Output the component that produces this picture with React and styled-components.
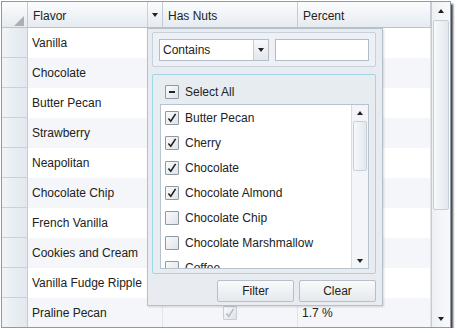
import React from "react";
import styled, { createGlobalStyle } from "styled-components";

const Global = createGlobalStyle`
  html, body { margin: 0; padding: 0; background: #fff; }
  body { font-family: "Liberation Sans", Arial, sans-serif; font-size: 12px; color: #222; }
  * { box-sizing: border-box; }
`;

const Frame = styled.div`
  position: relative;
  margin: 1px 0 0 1px;
  width: 450px;
  height: 327px;
  border: 1px solid #8f9aa6;
  box-shadow: 2px 3px 2px rgba(0, 0, 0, 0.75);
  display: flex;
  overflow: hidden;
  background: #fff;
`;

const Grid = styled.div`
  flex: 1;
  display: flex;
  flex-direction: column;
`;

const COLS = "26px 135px 135px 133px";

const HeaderRow = styled.div`
  display: grid;
  grid-template-columns: ${COLS};
  height: 26px;
  flex: none;
  background: linear-gradient(#fbfcfd, #e6ebf0);
  border-bottom: 1px solid #b9c3cd;
`;

const HeaderCell = styled.div`
  display: flex;
  align-items: center;
  padding-left: ${(p) => (p.$corner ? 0 : 5)}px;
  padding-top: ${(p) => (p.$corner ? 0 : 2)}px;
  border-right: 1px solid #c3ccd5;
  position: relative;
  color: #222;
`;

const HeaderLabel = styled.span`
  flex: 1;
`;

const FilterBtn = styled.div`
  width: 15px;
  align-self: stretch;
  margin-top: -2px;
  border-left: 1px solid #c9d1da;
  display: flex;
  align-items: center;
  justify-content: center;
`;

const Tri = styled.span`
  width: 0;
  height: 0;
  border-left: ${(p) => p.$s || 3.5}px solid transparent;
  border-right: ${(p) => p.$s || 3.5}px solid transparent;
  ${(p) =>
    p.$up
      ? `border-bottom: ${(p.$s || 3.5) + 0.5}px solid #222;`
      : `border-top: ${(p.$s || 3.5) + 0.5}px solid #222;`}
`;

const Corner = styled.span`
  margin: 12px 0 0 12px;
  width: 0;
  height: 0;
  border-left: 10px solid transparent;
  border-bottom: 10px solid #a9b0b8;
`;

const Row = styled.div`
  display: grid;
  grid-template-columns: ${COLS};
  height: 30px;
  flex: none;
  background: ${(p) => (p.$alt ? "#f4f6f9" : "#fff")};
`;

const RowHead = styled.div`
  background: linear-gradient(90deg, #f1f4f7, #e2e8ee);
  border-right: 1px solid #c3ccd5;
  border-bottom: 1px solid #c9d1d9;
`;

const Cell = styled.div`
  display: flex;
  align-items: center;
  justify-content: ${(p) => (p.$center ? "center" : "flex-start")};
  padding-left: ${(p) => (p.$center ? 0 : 4)}px;
  border-right: 1px solid #e2e6eb;
  color: #222;
`;

const VScroll = styled.div`
  width: 19px;
  flex: none;
  display: flex;
  flex-direction: column;
  border-left: 1px solid #c3ccd5;
  background: linear-gradient(90deg, #eef1f4, #f8f9fb);
`;

const ScrollBtn = styled.div`
  height: ${(p) => p.$h || 18}px;
  flex: none;
  display: flex;
  align-items: center;
  justify-content: center;
`;

const Thumb = styled.div`
  height: ${(p) => p.$h}px;
  flex: none;
  margin: 0 1px;
  border: 1px solid #c6ced7;
  border-radius: 2px;
  background: linear-gradient(90deg, #f7f9fb, #e3e8ee);
`;

const Track = styled.div`
  flex: 1;
`;

const Popup = styled.div`
  position: absolute;
  left: 145px;
  top: 26px;
  width: 236px;
  height: 278px;
  background: #e8ecf1;
  border: 1px solid #b6c0ca;
  box-shadow: 1px 1px 2px rgba(0, 0, 0, 0.15);
  display: flex;
  flex-direction: column;
  padding: 3px 6px 0 4px;
`;

const GroupBox = styled.div`
  height: 35px;
  border: 1px solid #c8d0d9;
  border-radius: 2px;
  background: #edf0f4;
  display: flex;
  align-items: center;
  gap: 6px;
  padding: 0 6px;
`;

const Combo = styled.div`
  width: 110px;
  height: 22px;
  display: flex;
  border: 1px solid #b3bdc7;
  background: #fff;
`;

const ComboText = styled.div`
  flex: 1;
  display: flex;
  align-items: center;
  padding-left: 3px;
  color: #222;
`;

const ComboBtn = styled.div`
  width: 15px;
  border-left: 1px solid #c5cdd6;
  background: linear-gradient(#f7f8fa, #e3e8ed);
  display: flex;
  align-items: center;
  justify-content: center;
`;

const TextBox = styled.div`
  flex: 1;
  height: 22px;
  border: 1px solid #b3bdc7;
  background: #fff;
`;

const ListFrame = styled.div`
  margin-top: 7px;
  height: 200px;
  border: 1px solid #9fd6e6;
  border-radius: 2px;
  background: #e7ecf1;
  display: flex;
  flex-direction: column;
  padding: 0 6px 4px 7px;
`;

const SelectAllRow = styled.div`
  height: 29px;
  flex: none;
  display: flex;
  align-items: center;
  gap: 6px;
  padding-left: 5px;
  padding-top: 4px;
`;

const List = styled.div`
  flex: 1;
  display: flex;
  border: 1px solid #b8c3cd;
  background: #fff;
  overflow: hidden;
`;

const Items = styled.div`
  flex: 1;
  padding-top: 0;
  overflow: hidden;
`;

const Item = styled.div`
  height: 25px;
  display: flex;
  align-items: center;
  gap: 6px;
  padding-left: 4px;
  white-space: nowrap;
`;

const Box = styled.span`
  width: 14px;
  height: 14px;
  flex: none;
  border: 1px solid ${(p) => (p.$faded ? "#c9ced4" : "#8e99a4")};
  border-radius: 1px;
  background: linear-gradient(135deg, #f9fafb, #dfe4ea);
  display: flex;
  align-items: center;
  justify-content: center;
`;

const ListScroll = styled.div`
  width: 17px;
  flex: none;
  display: flex;
  flex-direction: column;
  border-left: 1px solid #d6dde4;
  background: #f3f5f8;
`;

const Buttons = styled.div`
  display: flex;
  justify-content: flex-end;
  gap: 5px;
  margin-top: 6px;
`;

const Button = styled.div`
  width: 77px;
  height: 22px;
  border: 1px solid #b7c0ca;
  border-radius: 2px;
  background: linear-gradient(#f9fafb, #e4e9ee);
  display: flex;
  align-items: center;
  justify-content: center;
  color: #222;
`;

const Check = ({ color = "#1d1d1d" }) => (
  <svg width="10" height="10" viewBox="0 0 10 10">
    <path d="M1.4 5.4 L3.8 8.2 L8.6 0.8" fill="none" stroke={color} strokeWidth="1.5" />
  </svg>
);

const Minus = styled.span`
  width: 6px;
  height: 2px;
  background: #222;
`;

const flavors = [
  "Vanilla",
  "Chocolate",
  "Butter Pecan",
  "Strawberry",
  "Neapolitan",
  "Chocolate Chip",
  "French Vanilla",
  "Cookies and Cream",
  "Vanilla Fudge Ripple",
  "Praline Pecan",
];

const items = [
  ["Butter Pecan", true],
  ["Cherry", true],
  ["Chocolate", true],
  ["Chocolate Almond", true],
  ["Chocolate Chip", false],
  ["Chocolate Marshmallow", false],
  ["Coffee", false],
];

export default function App() {
  return (
    <>
      <Global />
      <Frame>
        <Grid>
          <HeaderRow>
            <HeaderCell $corner>
              <Corner />
            </HeaderCell>
            <HeaderCell>
              <HeaderLabel>Flavor</HeaderLabel>
              <FilterBtn>
                <Tri />
              </FilterBtn>
            </HeaderCell>
            <HeaderCell>Has Nuts</HeaderCell>
            <HeaderCell>Percent</HeaderCell>
          </HeaderRow>
          {flavors.map((f, i) => (
            <Row key={f} $alt={i % 2 === 1}>
              <RowHead />
              <Cell>{f}</Cell>
              <Cell $center>
                {i === 9 && (
                  <Box $faded>
                    <Check color="#b5bcc4" />
                  </Box>
                )}
              </Cell>
              <Cell>{i === 9 ? "1.7 %" : ""}</Cell>
            </Row>
          ))}
        </Grid>
        <VScroll>
          <ScrollBtn $h={18}>
            <Tri $up />
          </ScrollBtn>
          <Thumb $h={190} />
          <Track />
          <ScrollBtn $h={16}>
            <Tri />
          </ScrollBtn>
        </VScroll>
        <Popup>
          <GroupBox>
            <Combo>
              <ComboText>Contains</ComboText>
              <ComboBtn>
                <Tri />
              </ComboBtn>
            </Combo>
            <TextBox />
          </GroupBox>
          <ListFrame>
            <SelectAllRow>
              <Box>
                <Minus />
              </Box>
              Select All
            </SelectAllRow>
            <List>
              <Items>
                {items.map(([name, on]) => (
                  <Item key={name}>
                    <Box>{on && <Check />}</Box>
                    {name}
                  </Item>
                ))}
              </Items>
              <ListScroll>
                <ScrollBtn $h={16}>
                  <Tri $up />
                </ScrollBtn>
                <Thumb $h={50} />
                <Track />
                <ScrollBtn $h={14}>
                  <Tri />
                </ScrollBtn>
              </ListScroll>
            </List>
          </ListFrame>
          <Buttons>
            <Button>Filter</Button>
            <Button>Clear</Button>
          </Buttons>
        </Popup>
      </Frame>
    </>
  );
}
